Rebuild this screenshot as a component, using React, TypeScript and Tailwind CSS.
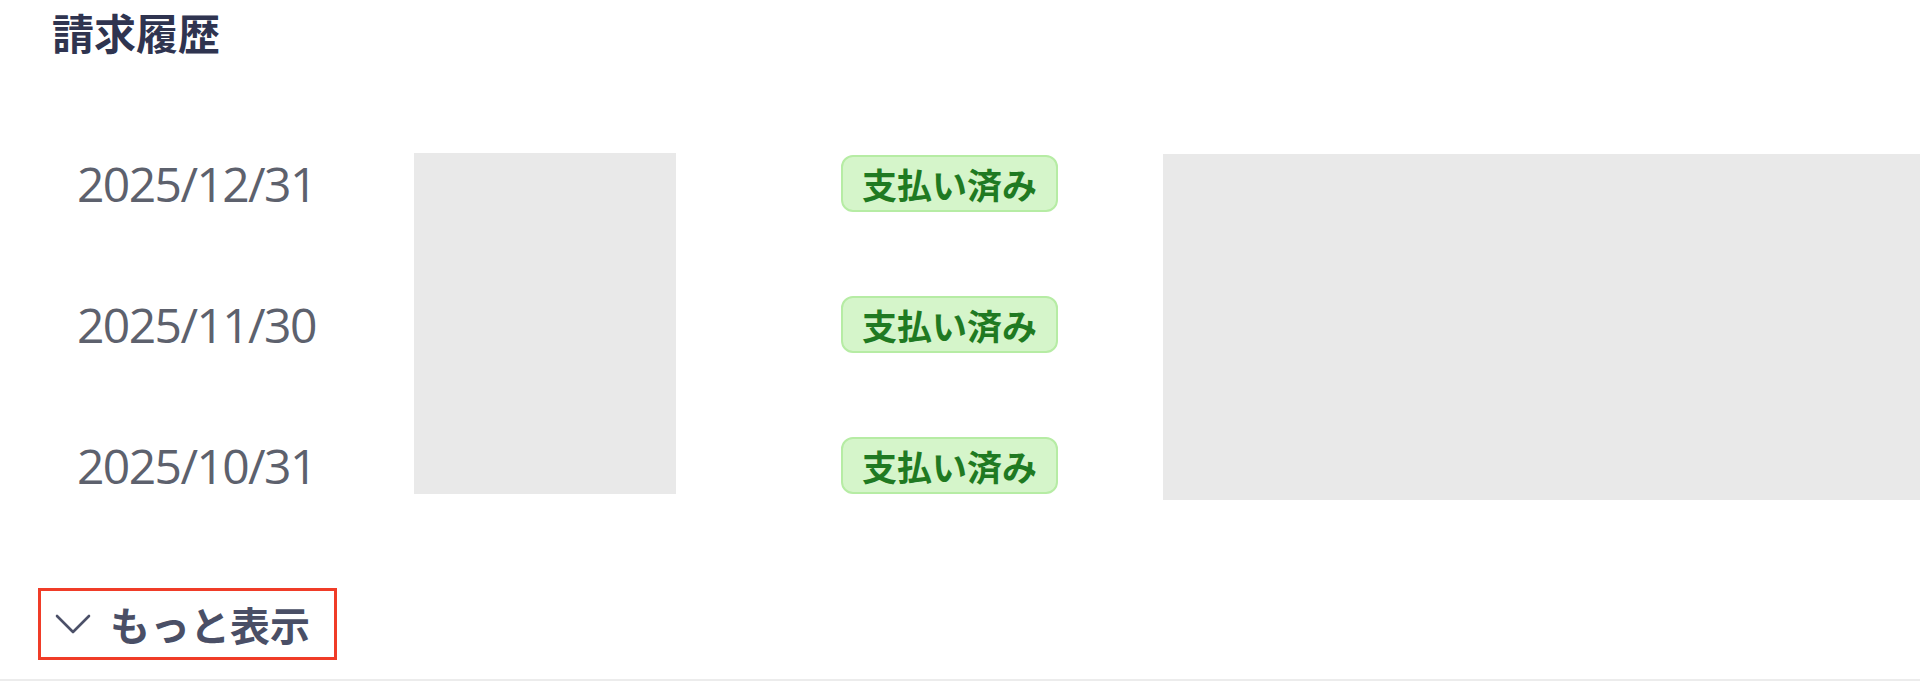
import React from 'react';

type Invoice = { date: string; status: string };

const invoices: Invoice[] = [
  { date: '2025/12/31', status: '支払い済み' },
  { date: '2025/11/30', status: '支払い済み' },
  { date: '2025/10/31', status: '支払い済み' },
];

const jp = { fontFamily: '"Noto Sans CJK JP", "Noto Sans", sans-serif' };
const latin = { fontFamily: '"Open Sans", "Noto Sans CJK JP", sans-serif' };

const App: React.FC = () => {
  return (
    <div className="w-[1920px] h-[681px] bg-white border-b-2 border-[#ececec] overflow-hidden" style={jp}>
      <h2 className="pl-[52px] pt-[11px] text-[42px] leading-none font-bold text-[#2f3450]">請求履歴</h2>

      {/* history rows, the masked columns are plain grey blocks */}
      <div className="flex items-start mt-[60px] pl-[77px]">
        <div className="w-[337px] flex flex-col">
          {invoices.map(inv => (
            <div key={inv.date} className="h-[141px] flex items-center">
              <span className="text-[48px] leading-none tracking-[-1.6px] text-[#5d616d]" style={latin}>
                {inv.date}
              </span>
            </div>
          ))}
        </div>

        <div className="w-[262px] h-[341px] mt-[40px] bg-[#e9e9e9]" />

        <div className="ml-[165px] flex flex-col">
          {invoices.map(inv => (
            <div key={inv.date} className="h-[141px] flex items-center">
              <span className="w-[217px] h-[57px] flex items-center justify-center rounded-[12px] border-2 border-[#b6eca4] bg-[#d5f5ca] text-[35px] leading-none font-bold text-[#1f7a22]">
                {inv.status}
              </span>
            </div>
          ))}
        </div>

        <div className="flex-1 ml-[105px] h-[346px] mt-[41px] bg-[#e9e9e9]" />
      </div>

      <div className="pl-[38px] mt-[52px]">
        <button className="w-[299px] h-[72px] flex items-center gap-[19px] pl-[14px] border-[3px] border-[#f03c28] text-[40px] leading-none font-bold text-[#4a4f66]">
          <svg width="36" height="22" viewBox="0 0 36 22" fill="none" stroke="#4b5068" strokeWidth="2.6" strokeLinecap="round" strokeLinejoin="round">
            <polyline points="2,3 18,19 34,3" />
          </svg>
          <span>もっと表示</span>
        </button>
      </div>
    </div>
  );
};

export default App;
